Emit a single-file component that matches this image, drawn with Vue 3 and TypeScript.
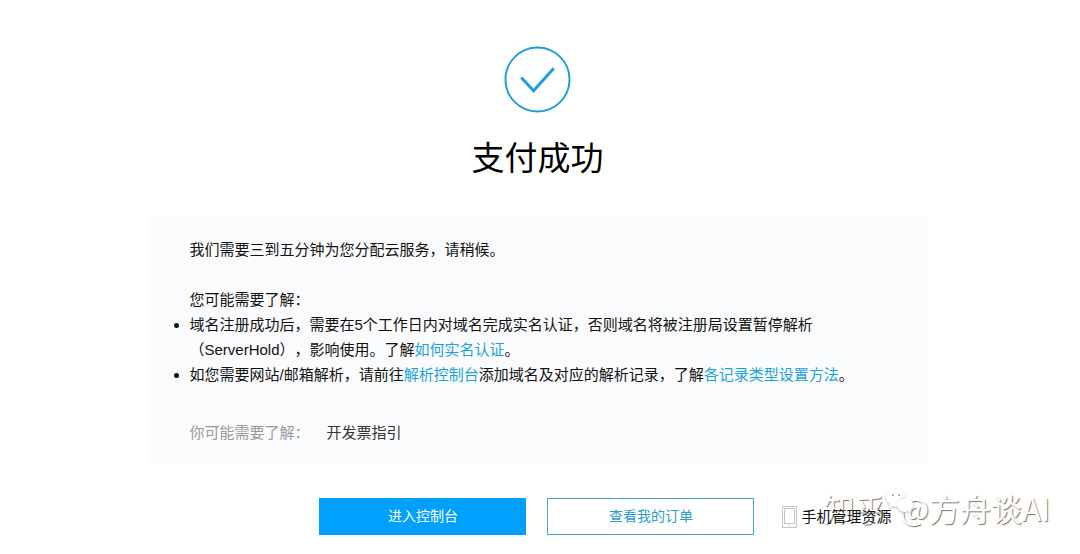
<script setup lang="ts">
const heading = '支付成功'
const watermark = '@方舟谈AI'
</script>

<template>
  <main class="page">
    <svg class="check" viewBox="0 0 68 68" aria-hidden="true">
      <circle cx="34" cy="34" r="32.5" />
      <path d="M17.5 32 L30 45.5 L50.5 22.5" />
    </svg>
    <h1>{{ heading }}</h1>

    <section class="panel">
      <p>我们需要三到五分钟为您分配云服务，请稍候。</p>
      <p class="lead">您可能需要了解：</p>
      <ul>
        <li>域名注册成功后，需要在5个工作日内对域名完成实名认证，否则域名将被注册局设置暂停解析（ServerHold），影响使用。了解<a href="#verify">如何实名认证</a>。</li>
        <li>如您需要网站/邮箱解析，请前往<a href="#dns">解析控制台</a>添加域名及对应的解析记录，了解<a href="#records">各记录类型设置方法</a>。</li>
      </ul>
      <div class="more">
        <span>你可能需要了解：</span>
        <a href="#invoice">开发票指引</a>
      </div>
    </section>

    <div class="actions">
      <button type="button" class="primary">进入控制台</button>
      <button type="button">查看我的订单</button>
      <a class="mobile" href="#mobile">
        <svg viewBox="0 0 15 22" aria-hidden="true">
          <rect x="0.5" y="0.5" width="14" height="21" />
          <rect x="2.5" y="2.5" width="10" height="15" />
          <path d="M6.5 19.5h2" />
        </svg>
        手机管理资源
      </a>
    </div>

    <div class="watermark">
      <span>知乎</span>
      <svg viewBox="0 0 28 28" aria-hidden="true">
        <path d="M10 1C4 1 0 4 0 9c0 3 1 5 4 7l-1 4 4-2 4 1c-1-6 3-10 9-10C19 4 15 1 10 1z" />
        <path d="M19 10c-5 0-8 3-8 7s4 7 8 7l3-1 3 2-1-3c2-1 3-3 3-5 0-4-3-7-8-7z" />
        <g class="eyes">
          <circle cx="7" cy="7" r="1" />
          <circle cx="13" cy="7" r="1" />
        </g>
      </svg>
      <span>{{ watermark }}</span>
    </div>
  </main>
</template>

<style>
body {
  margin: 0;
  background: #fff;
}
</style>

<style scoped>
.page {
  position: relative;
  display: flex;
  flex-direction: column;
  align-items: center;
  padding: 46px 5px 19px 0;
  overflow: hidden;
  font-family: "Liberation Sans", "Noto Sans CJK SC", sans-serif;
  font-size: 15px;
  line-height: 25px;
  color: #111;
  text-spacing-trim: space-all;
}

.check {
  width: 67px;
  height: 67px;
  fill: none;
  stroke: #1d9fd8;
  stroke-width: 2;
}

.check path {
  stroke-width: 3;
}

h1 {
  margin: 22px 0 34px;
  font-size: 33px;
  font-weight: 400;
  line-height: 48px;
  color: #000;
}

.panel {
  box-sizing: border-box;
  width: 90%;
  max-width: 778px;
  padding: 20px 41px 18px;
  background: #fafbfd;
}

p,
ul {
  margin: 0;
  padding: 0;
}

.lead {
  margin-top: 25px;
}

a {
  color: #1aa3df;
  text-decoration: none;
}

.more {
  display: flex;
  gap: 17px;
  margin-top: 33px;
  color: #999;
}

.more a {
  color: #333;
}

.actions {
  display: flex;
  align-items: center;
  gap: 21px;
  margin: 35px 0 0 136px;
}

button {
  width: 207px;
  height: 37px;
  padding: 0;
  border: 1px solid #4aa9c6;
  background: #fff;
  color: #2a9dcb;
  font: inherit;
  font-size: 14px;
}

.primary {
  border-color: #00a0ff;
  background: #00a0ff;
  color: #fff;
}

.mobile {
  z-index: 1;
  display: flex;
  align-items: center;
  gap: 4px;
  margin-left: 7px;
  color: #111;
}

.mobile svg {
  width: 15px;
  height: 22px;
  fill: none;
  stroke: #c0c8cb;
}

.watermark {
  position: absolute;
  right: 30px;
  bottom: 22px;
  display: flex;
  align-items: center;
  font-family: "Noto Sans CJK SC", sans-serif;
  font-size: 31px;
  line-height: 48px;
  color: #fff;
  text-shadow: 1px 1px 1px #777;
  pointer-events: none;
}

.watermark svg {
  width: 28px;
  height: 28px;
  margin: 0 -14px 12px 0;
  fill: #fff;
  filter: drop-shadow(0 1px 1px #bbb);
}

.eyes {
  fill: #999;
}
</style>
